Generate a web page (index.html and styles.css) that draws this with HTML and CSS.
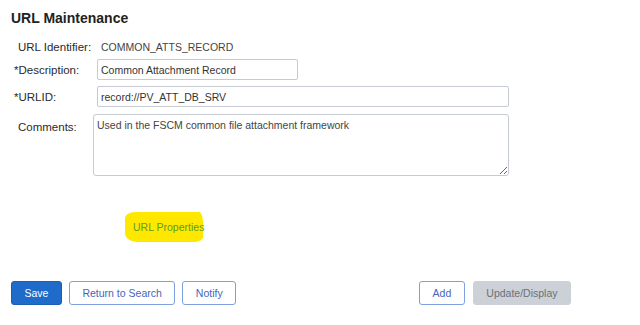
FILE: index.html
```html
<!DOCTYPE html>
<html>
<head>
<meta charset="utf-8">
<link rel="stylesheet" href="styles.css">
</head>
<body>
<h1 class="title">URL Maintenance</h1>
<div class="form">
  <div class="row row-id">
    <span class="label plain">URL Identifier:</span>
    <span class="value">COMMON_ATTS_RECORD</span>
  </div>
  <div class="row row-desc">
    <span class="label"><span class="req">*</span>Description:</span>
    <input class="field field-short" type="text" value="Common Attachment Record">
  </div>
  <div class="row row-urlid">
    <span class="label"><span class="req">*</span>URLID:</span>
    <input class="field field-long" type="text" value="record://PV_ATT_DB_SRV">
  </div>
  <div class="row row-comments">
    <span class="label plain label-top">Comments:</span>
    <textarea class="area">Used in the FSCM common file attachment framework</textarea>
  </div>
</div>
<div class="props">
  <a class="hl">URL Properties</a>
</div>
<div class="toolbar">
  <div class="group">
    <button class="btn primary">Save</button>
    <button class="btn">Return to Search</button>
    <button class="btn">Notify</button>
  </div>
  <div class="group group-right">
    <button class="btn">Add</button>
    <button class="btn disabled">Update/Display</button>
  </div>
</div>
</body>
</html>
```

FILE: styles.css
```css
html, body {
  margin: 0;
  padding: 0;
  background: #ffffff;
  font-family: "Liberation Sans", Arial, sans-serif;
}

.title {
  margin: 0;
  padding: 9px 0 0 11px;
  font-size: 14px;
  line-height: 19px;
  font-weight: bold;
  color: #222222;
}

.form {
  padding: 12px 0 0 14px;
  display: flex;
  flex-direction: column;
}

.row {
  display: flex;
  align-items: center;
}

.row-id { height: 14px; }
.row-desc { margin-top: 5px; }
.row-urlid { margin-top: 6px; }
.row-comments { margin-top: 7px; align-items: flex-start; }

.label {
  width: 83px;
  flex: none;
  font-size: 11.5px;
  color: #2a2a2a;
}

.label.plain { padding-left: 4px; box-sizing: border-box; }
.label-top { padding-top: 7px; }

.req { color: #2a2a2a; }

.value {
  padding-left: 4px;
  font-size: 10.5px;
  color: #444444;
}

.field {
  box-sizing: border-box;
  height: 21px;
  border: 1px solid #c5cad3;
  border-radius: 2px;
  padding: 0 3px;
  margin: 0;
  font-family: "Liberation Sans", Arial, sans-serif;
  font-size: 10.5px;
  color: #333333;
  background: #ffffff;
}

.field-short { width: 201px; }
.field-long { width: 412px; }

.area {
  box-sizing: border-box;
  margin: 0 0 0 -4px;
  width: 416px;
  height: 62px;
  border: 1px solid #c5cad3;
  border-radius: 3px;
  padding: 4px 3px;
  font-family: "Liberation Sans", Arial, sans-serif;
  font-size: 10.5px;
  color: #444444;
  resize: both;
}

.props {
  padding: 36px 0 0 125px;
  height: 30px;
}

.hl {
  display: block;
  box-sizing: border-box;
  width: 78px;
  height: 30px;
  line-height: 30px;
  padding-left: 8px;
  white-space: nowrap;
  font-size: 10.5px;
  color: #5d9a26;
  background: #ffe800;
  border-radius: 10px 4px 8px 12px / 6px 10px 5px 9px;
}

.toolbar {
  display: flex;
  justify-content: space-between;
  padding: 39px 69px 0 11px;
}

.group {
  display: flex;
  gap: 7px;
}

.group-right { gap: 8px; }

.btn {
  box-sizing: border-box;
  height: 24px;
  padding: 0 12.5px;
  margin: 0;
  border: 1px solid #7f9fe0;
  border-radius: 3px;
  background: #ffffff;
  font-family: "Liberation Sans", Arial, sans-serif;
  font-size: 10.5px;
  color: #4466bb;
}

.btn.primary {
  background: #1f6bca;
  border-color: #1a5fb5;
  color: #ffffff;
}

.btn.disabled {
  background: #ccd0d7;
  border-color: #ccd0d7;
  color: #6b717a;
}
```
